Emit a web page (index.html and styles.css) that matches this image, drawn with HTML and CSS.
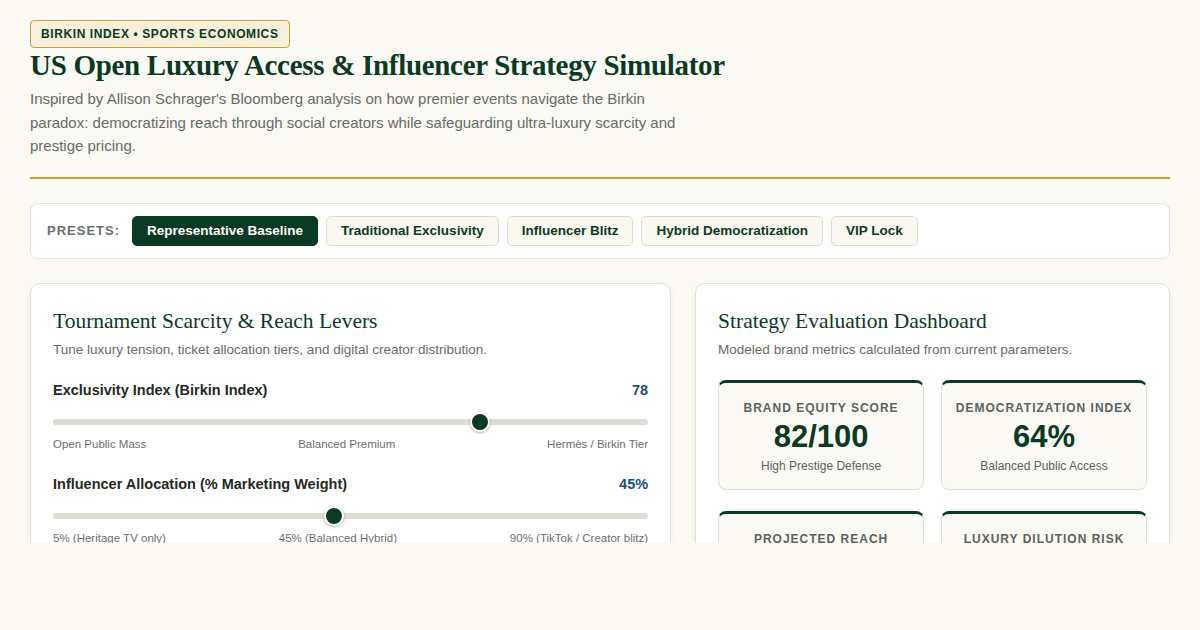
FILE: index.html
```html
<!DOCTYPE html>
<html lang="en">
<head>
<meta charset="utf-8">
<title>US Open Luxury Access &amp; Influencer Strategy Simulator</title>
<link rel="stylesheet" href="styles.css">
</head>
<body>
<div class="viewport">
  <div class="page">
    <header class="hero">
      <span class="badge">Birkin Index • Sports Economics</span>
      <h1 class="title">US Open Luxury Access &amp; Influencer Strategy Simulator</h1>
      <p class="lede">Inspired by Allison Schrager's Bloomberg analysis on how premier events navigate the Birkin paradox: democratizing reach through social creators while safeguarding ultra-luxury scarcity and prestige pricing.</p>
    </header>

    <nav class="presets">
      <span class="presets-label">Presets:</span>
      <button class="preset active">Representative Baseline</button>
      <button class="preset">Traditional Exclusivity</button>
      <button class="preset">Influencer Blitz</button>
      <button class="preset">Hybrid Democratization</button>
      <button class="preset">VIP Lock</button>
    </nav>

    <main class="grid">
      <section class="card">
        <h2 class="card-title">Tournament Scarcity &amp; Reach Levers</h2>
        <p class="card-sub">Tune luxury tension, ticket allocation tiers, and digital creator distribution.</p>

        <div class="control">
          <div class="control-head">
            <span class="control-label">Exclusivity Index (Birkin Index)</span>
            <span class="control-value">78</span>
          </div>
          <input class="range" type="range" min="20" max="100" value="78">
          <div class="ticks"><span>Open Public Mass</span><span>Balanced Premium</span><span>Hermès / Birkin Tier</span></div>
        </div>

        <div class="control">
          <div class="control-head">
            <span class="control-label">Influencer Allocation (% Marketing Weight)</span>
            <span class="control-value">45%</span>
          </div>
          <input class="range" type="range" min="5" max="90" value="45">
          <div class="ticks"><span>5% (Heritage TV only)</span><span>45% (Balanced Hybrid)</span><span>90% (TikTok / Creator blitz)</span></div>
        </div>
      </section>

      <section class="card">
        <h2 class="card-title">Strategy Evaluation Dashboard</h2>
        <p class="card-sub">Modeled brand metrics calculated from current parameters.</p>
        <div class="metrics">
          <div class="metric">
            <div class="metric-label">Brand Equity Score</div>
            <div class="metric-value">82/100</div>
            <div class="metric-note">High Prestige Defense</div>
          </div>
          <div class="metric">
            <div class="metric-label">Democratization Index</div>
            <div class="metric-value">64%</div>
            <div class="metric-note">Balanced Public Access</div>
          </div>
          <div class="metric">
            <div class="metric-label">Projected Reach</div>
            <div class="metric-value">41.2M</div>
            <div class="metric-note">Global Impressions</div>
          </div>
          <div class="metric">
            <div class="metric-label">Luxury Dilution Risk</div>
            <div class="metric-value">Low</div>
            <div class="metric-note">Scarcity Preserved</div>
          </div>
        </div>
      </section>
    </main>
  </div>
</div>
</body>
</html>
```

FILE: styles.css
```css
* { box-sizing: border-box; }
html, body {
  margin: 0;
  padding: 0;
  background: #faf9f4;
}
body {
  font-family: "Liberation Sans", Arial, sans-serif;
  color: #1f2a24;
}
.viewport {
  height: 543px;
  overflow: hidden;
}
.page {
  padding: 20px 30px 40px;
}
.hero {
  padding-bottom: 19px;
  border-bottom: 2px solid #c9a23a;
}
.badge {
  display: inline-block;
  font-size: 12px;
  font-weight: 700;
  letter-spacing: 0.6px;
  text-transform: uppercase;
  color: #0b3a24;
  background: #f6efd9;
  border: 1px solid #c9a23a;
  border-radius: 4px;
  padding: 6px 10px;
  line-height: 14px;
}
.title {
  margin: 0;
  font-family: "Liberation Serif", "Times New Roman", serif;
  font-weight: 700;
  font-size: 29px;
  letter-spacing: -0.3px;
  line-height: 34px;
  color: #0b3a24;
}
.lede {
  margin: 5px 0 0;
  max-width: 660px;
  font-size: 15px;
  line-height: 23.5px;
  color: #676b67;
}
.presets {
  margin-top: 24px;
  display: flex;
  align-items: center;
  gap: 8px;
  padding: 12px 16px;
  background: #ffffff;
  border: 1px solid #e5e1d4;
  border-radius: 8px;
  height: 56px;
}
.presets-label {
  font-size: 13px;
  font-weight: 700;
  letter-spacing: 1px;
  text-transform: uppercase;
  color: #6b706c;
  margin-right: 4px;
}
.preset {
  font-family: "Liberation Sans", Arial, sans-serif;
  font-size: 13.5px;
  font-weight: 700;
  color: #0b3a24;
  background: #faf8f1;
  border: 1px solid #e2dccb;
  border-radius: 5px;
  height: 30px;
  padding: 0 14px;
  cursor: pointer;
}
.preset.active {
  background: #0b3a24;
  border-color: #0b3a24;
  color: #ffffff;
}
.grid {
  margin-top: 24px;
  display: grid;
  grid-template-columns: 1.35fr 1fr;
  gap: 24px;
  align-items: start;
}
.card {
  background: #ffffff;
  border: 1px solid #e5e1d4;
  border-radius: 10px;
  padding: 24px 22px;
  box-shadow: 0 2px 6px rgba(30, 40, 30, 0.05);
}
.card-title {
  margin: 0;
  font-family: "Liberation Serif", "Times New Roman", serif;
  font-weight: 400;
  font-size: 21.5px;
  line-height: 26px;
  color: #0b3a24;
}
.card-sub {
  margin: 7px 0 0;
  font-size: 13.5px;
  line-height: 18px;
  color: #676c68;
}
.control { margin-top: 23px; }
.control + .control { margin-top: 25px; }
.control-head {
  display: flex;
  justify-content: space-between;
  align-items: baseline;
}
.control-label {
  font-size: 14.5px;
  font-weight: 700;
  color: #1f2a24;
}
.control-value {
  font-size: 14.5px;
  font-weight: 700;
  color: #1d4e7a;
}
.range {
  -webkit-appearance: none;
  appearance: none;
  display: block;
  width: 100%;
  height: 20px;
  margin: 14px 0 5px;
  background: transparent;
}
.range::-webkit-slider-runnable-track {
  height: 6px;
  border-radius: 3px;
  background: #dfdcd4;
}
.range::-webkit-slider-thumb {
  -webkit-appearance: none;
  appearance: none;
  width: 20px;
  height: 20px;
  margin-top: -7px;
  border-radius: 50%;
  background: #0b3a24;
  border: 2px solid #ffffff;
  box-shadow: 0 1px 3px rgba(0, 0, 0, 0.3);
}
.ticks {
  display: flex;
  justify-content: space-between;
  font-size: 11.5px;
  color: #6b706c;
  line-height: 14px;
}
.metrics {
  margin-top: 21px;
  display: grid;
  grid-template-columns: 1fr 1fr;
  gap: 21px 17px;
}
.metric {
  background: #faf9f4;
  border: 1px solid #e2dfd3;
  border-top: 3px solid #0b3a24;
  border-radius: 8px;
  padding: 18px 10px 15px;
  text-align: center;
}
.metric-label {
  font-size: 12px;
  font-weight: 700;
  letter-spacing: 1px;
  text-transform: uppercase;
  color: #5c625d;
  line-height: 15px;
}
.metric-value {
  margin-top: 3px;
  font-size: 31px;
  font-weight: 700;
  color: #0b3a24;
  line-height: 36px;
}
.metric-note {
  margin-top: 4px;
  font-size: 12px;
  color: #5c625d;
  line-height: 15px;
}
```
